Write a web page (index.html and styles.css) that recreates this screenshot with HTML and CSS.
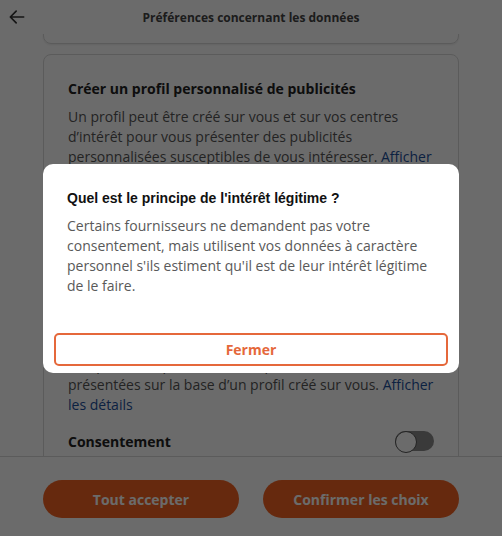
FILE: index.html
```html
<!DOCTYPE html>
<html lang="fr">
<head>
    <meta charset="UTF-8">
    <meta name="viewport" content="width=device-width, initial-scale=1.0">
    <title>Préférences concernant les données</title>
    <link rel="stylesheet" href="styles.css">
</head>
<body>
    <div class="screen">
        <header class="topbar">
            <button class="back" aria-label="Retour">
                <svg width="20" height="20" viewBox="0 0 24 24"><path d="M20 12H4.5M11 5l-7 7 7 7" fill="none" stroke="#333" stroke-width="2" stroke-linecap="round" stroke-linejoin="round"/></svg>
            </button>
            <h1>Préférences concernant les données</h1>
        </header>

        <main class="content">
            <section class="card card-prev">
                <p>Stocker et/ou accéder à des informations sur un appareil</p>
            </section>

            <section class="card">
                <div class="purpose">
                    <h2>Créer un profil personnalisé de publicités</h2>
                    <p>Un profil peut être créé sur vous et sur vos centres d’intérêt pour vous présenter des publicités personnalisées susceptibles de vous intéresser. <a href="#">Afficher les détails</a></p>
                    <div class="row"><span>Consentement</span><span class="toggle"></span></div>
                    <div class="row"><span>Intérêt légitime</span><span class="toggle"></span></div>
                </div>
                <div class="purpose">
                    <h2>Utiliser des profils pour sélectionner des publicités personnalisées</h2>
                    <p>Des publicités personnalisées peuvent vous être<br>présentées sur la base d’un profil créé sur vous. <a href="#">Afficher les détails</a></p>
                    <div class="row"><span>Consentement</span><span class="toggle"></span></div>
                </div>
            </section>
        </main>

        <footer class="actions">
            <button class="btn">Tout accepter</button>
            <button class="btn">Confirmer les choix</button>
        </footer>
    </div>

    <div class="overlay">
        <div class="dialog">
            <h3>Quel est le principe de l'intérêt légitime ?</h3>
            <p>Certains fournisseurs ne demandent pas votre consentement, mais utilisent vos données à caractère personnel s'ils estiment qu'il est de leur intérêt légitime de le faire.</p>
            <div class="dialog-footer">
                <button class="close">Fermer</button>
            </div>
        </div>
    </div>
</body>
</html>
```

FILE: styles.css
```css
* {
    box-sizing: border-box;
}
body {
    margin: 0;
    font-family: "Open Sans", Arial, sans-serif;
    background-color: #fff;
    color: #333;
}
.screen {
    height: 536px;
    display: flex;
    flex-direction: column;
    overflow: hidden;
}
.topbar {
    height: 34px;
    display: flex;
    align-items: center;
    justify-content: center;
    position: relative;
    flex-shrink: 0;
}
.topbar h1 {
    margin: 0;
    font-size: 12px;
    font-weight: 700;
    color: #444;
}
.back {
    position: absolute;
    left: 7px;
    top: 7px;
    border: none;
    background: none;
    padding: 0;
    display: flex;
}
.content {
    flex: 1;
    overflow: hidden;
    padding: 0 43px;
}
.card {
    border: 1px solid #d9d9d9;
    border-radius: 8px;
    padding: 24px 24px;
    margin-bottom: 10px;
}
.card-prev {
    height: 100px;
    margin-top: -90px;
    padding-top: 20px;
    box-shadow: 0 1px 2px rgba(0, 0, 0, 0.08);
}
.card-prev p {
    margin: 0;
    font-size: 14px;
    line-height: 20px;
    font-weight: 700;
    color: #222;
}
.purpose h2 {
    margin: 0 0 8px;
    font-size: 14px;
    line-height: 20px;
    font-weight: 700;
    color: #222;
}
.purpose p {
    margin: 0;
    font-size: 14px;
    line-height: 20px;
    color: #555;
}
.purpose p a {
    color: #1b4f9c;
    text-decoration: none;
}
.purpose + .purpose {
    margin-top: 48px;
}
.row {
    display: flex;
    justify-content: space-between;
    align-items: center;
    margin-top: 16px;
    height: 20px;
    font-size: 14px;
    font-weight: 700;
    color: #222;
}
.toggle {
    width: 39px;
    height: 20px;
    border-radius: 10px;
    background-color: #8a8a8a;
    position: relative;
}
.toggle::before {
    content: "";
    position: absolute;
    left: 0;
    top: 0;
    width: 20px;
    height: 20px;
    border-radius: 50%;
    background-color: #fff;
    border: 1px solid #555;
}
.actions {
    flex-shrink: 0;
    height: 80px;
    border-top: 1px solid #d9d9d9;
    display: flex;
    gap: 24px;
    padding: 23px 43px 0;
    background-color: #fff;
}
.btn {
    flex: 1;
    height: 38px;
    border: none;
    border-radius: 19px;
    background-color: #f46322;
    color: #fff;
    font-family: "Open Sans", Arial, sans-serif;
    font-size: 14px;
    font-weight: 700;
}
.overlay {
    position: fixed;
    inset: 0;
    background-color: rgba(0, 0, 0, 0.58);
    display: flex;
    align-items: center;
    justify-content: center;
}
.dialog {
    width: 416px;
    height: 209px;
    background-color: #fff;
    border-radius: 10px;
    padding: 24px 0 7px;
    display: flex;
    flex-direction: column;
}
.dialog h3 {
    margin: 0 24px 8px;
    font-family: "Liberation Sans", Arial, sans-serif;
    font-size: 14px;
    line-height: 20px;
    font-weight: 700;
    color: #111;
}
.dialog p {
    margin: 0 24px;
    font-size: 14px;
    line-height: 20px;
    color: #595959;
}
.dialog-footer {
    margin-top: auto;
    padding: 0 11px;
}
.close {
    width: 100%;
    height: 33px;
    border: 2px solid #e5683b;
    border-radius: 5px;
    background-color: #fff;
    color: #e5683b;
    font-family: "Open Sans", Arial, sans-serif;
    font-size: 14px;
    font-weight: 700;
}
```
